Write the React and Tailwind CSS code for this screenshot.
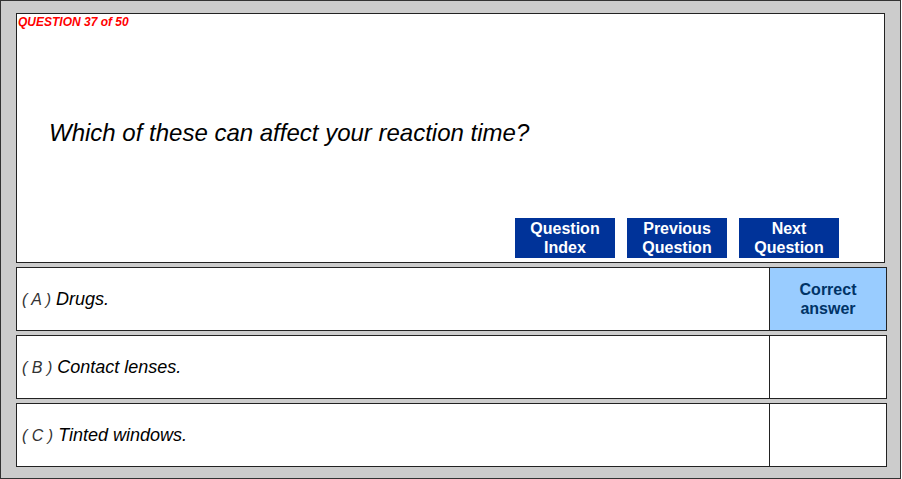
const answers = [
  { letter: 'A', text: 'Drugs.', correct: true },
  { letter: 'B', text: 'Contact lenses.', correct: false },
  { letter: 'C', text: 'Tinted windows.', correct: false },
];

const NavButton = ({ top, bottom }) => (
  <button className="w-[100px] h-[40px] bg-[#003399] text-white text-[16px] font-bold leading-[19px] flex flex-col items-center justify-center">
    <span>{top}</span>
    <span>{bottom}</span>
  </button>
);

export default function App() {
  return (
    <div className="w-[901px] h-[479px] bg-[#cccccc] border border-[#333333] pl-[15px] pt-[12px] font-['Liberation_Sans',Arial,sans-serif]">
      <div className="w-[869px] h-[250px] bg-white border border-[#222222] flex flex-col">
        <div className="pl-[1px] pt-[1px] text-[12px] leading-[14px] font-bold italic text-[#ff0000]">
          QUESTION 37 of 50
        </div>
        <div className="pl-[32px] pt-[90px] text-[24px] leading-[28px] italic text-black">
          Which of these can affect your reaction time?
        </div>
        <div className="mt-auto mb-[4px] ml-[498px] flex gap-[12px]">
          <NavButton top="Question" bottom="Index" />
          <NavButton top="Previous" bottom="Question" />
          <NavButton top="Next" bottom="Question" />
        </div>
      </div>
      <div className="mt-[4px] flex flex-col gap-[4px]">
        {answers.map((a) => (
          <div key={a.letter} className="w-[871px] h-[64px] bg-white border border-[#222222] flex">
            <div className="flex-1 flex items-baseline self-center pl-[5px] italic text-black">
              <span className="text-[16px] text-[#333333]">( {a.letter} )</span>
              <span className="ml-[5px] text-[18px]">{a.text}</span>
            </div>
            <div
              className={`w-[117px] border-l border-[#222222] flex items-center justify-center text-center text-[16px] leading-[19px] font-bold text-[#003366] ${
                a.correct ? 'bg-[#99ccff]' : 'bg-white'
              }`}
            >
              {a.correct && (
                <span>
                  Correct
                  <br />
                  answer
                </span>
              )}
            </div>
          </div>
        ))}
      </div>
    </div>
  );
}
